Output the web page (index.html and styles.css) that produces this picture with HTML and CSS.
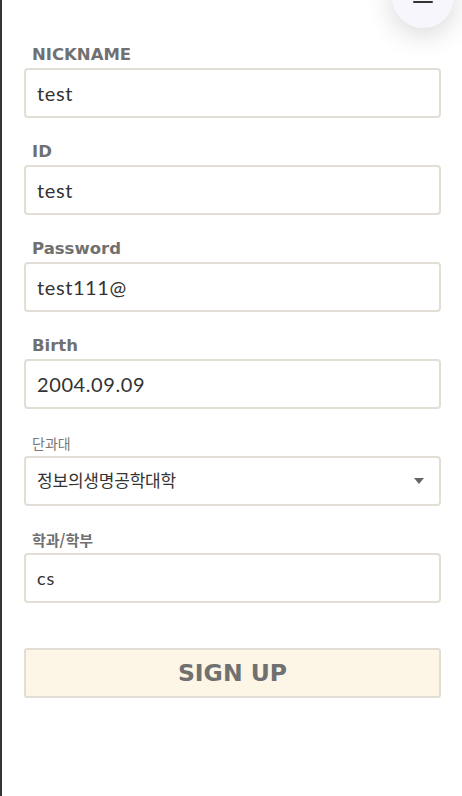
FILE: index.html
```html
<!DOCTYPE html>
<html lang="ko">
<head>
<meta charset="utf-8">
<link rel="stylesheet" href="styles.css">
</head>
<body>
<div class="page">
  <button class="menu-btn" aria-label="menu"><span class="bar"></span></button>
  <form class="form">
    <div class="group">
      <label class="label">NICKNAME</label>
      <div class="field">test</div>
    </div>
    <div class="group">
      <label class="label">ID</label>
      <div class="field">test</div>
    </div>
    <div class="group">
      <label class="label">Password</label>
      <div class="field">test111@</div>
    </div>
    <div class="group">
      <label class="label">Birth</label>
      <div class="field">2004.09.09</div>
    </div>
    <div class="group">
      <label class="label label-light">단과대</label>
      <div class="field select"><span class="select-text">정보의생명공학대학</span><span class="caret"></span></div>
    </div>
    <div class="group">
      <label class="label label-kr">학과/학부</label>
      <div class="field field-small">cs</div>
    </div>
    <div class="submit">SIGN UP</div>
  </form>
</div>
</body>
</html>
```
FILE: styles.css
```css
* { box-sizing: border-box; }
html, body { margin: 0; padding: 0; background: #fff; }
body { font-family: "Lato", "Noto Sans CJK KR", sans-serif; }
.page {
  position: relative;
  width: 462px;
  height: 796px;
  border-left: 2px solid #333;
  overflow: hidden;
}
.menu-btn {
  position: absolute;
  left: 390px;
  top: -34px;
  width: 62px;
  height: 62px;
  border-radius: 50%;
  border: none;
  background: #f8f6fd;
  box-shadow: 0 6px 28px rgba(0,0,0,0.16);
  padding: 0;
}
.menu-btn .bar {
  position: absolute;
  left: 21px;
  top: 35px;
  width: 20px;
  height: 2px;
  background: #333;
  border-radius: 1px;
}
.form {
  display: flex;
  flex-direction: column;
  padding: 44px 21px 0 22px;
  gap: 23px;
}
.group { display: flex; flex-direction: column; gap: 3px; }
.label {
  font-family: "DejaVu Sans", "Noto Sans CJK KR", sans-serif;
  font-size: 16.5px;
  line-height: 20px;
  padding-top: 1px;
  font-weight: 700;
  color: #707070;
  padding-left: 8px;
}
.label-light {
  font-family: "Noto Sans CJK KR", sans-serif;
  font-weight: 400;
  font-size: 14px;
  color: #777;
}
.label-kr {
  font-family: "Noto Sans CJK KR", sans-serif;
  font-size: 15px;
  font-weight: 700;
}
.field {
  height: 50px;
  border: 2px solid #e2ded5;
  border-radius: 4px;
  padding: 0 11px;
  display: flex;
  align-items: center;
  font-size: 20px;
  color: #333;
  letter-spacing: 0.6px;
}
.field-small { font-size: 18px; letter-spacing: 1px; }
.select {
  justify-content: space-between;
  font-size: 17px;
  letter-spacing: -0.2px;
  padding-bottom: 3px;
}
.caret {
  width: 0; height: 0;
  border-left: 5px solid transparent;
  border-right: 5px solid transparent;
  border-top: 6px solid #666;
  margin-right: 4px;
  margin-top: 3px;
}
.submit {
  margin-top: 22px;
  height: 50px;
  border: 2px solid #e2ded5;
  border-radius: 3px;
  background: #fdf5e6;
  display: flex;
  align-items: center;
  justify-content: center;
  font-family: "DejaVu Sans", sans-serif;
  font-size: 23.5px;
  font-weight: 700;
  color: #707070;
}
```
